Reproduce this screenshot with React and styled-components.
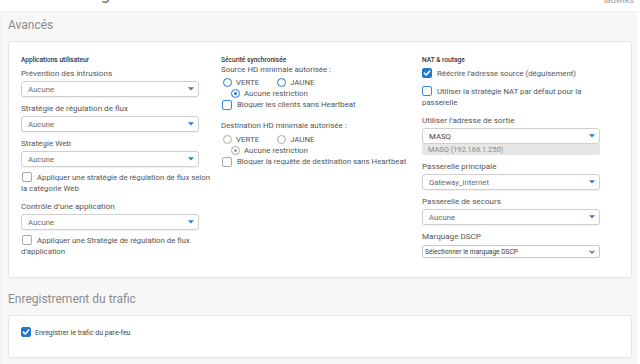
import React from "react";
import styled, { createGlobalStyle, css } from "styled-components";

const Global = createGlobalStyle`
  html, body { margin: 0; padding: 0; background: #ffffff; }
  body { font-family: Roboto, "Liberation Sans", Arial, sans-serif; -webkit-font-smoothing: antialiased; }
  * { box-sizing: border-box; }
`;

const Page = styled.div`
  width: 640px;
  height: 364px;
  overflow: hidden;
  background: #ffffff;
`;

const TopStrip = styled.div`
  height: 12px;
  overflow: hidden;
  display: flex;
  justify-content: space-between;
  align-items: flex-start;
  padding: 0 6px 0 8px;
  border-bottom: 1px solid #f0f0f0;
`;

const TopTitle = styled.span`
  font-size: 16px;
  line-height: 16px;
  margin-top: -13px;
  color: #666;
`;

const TopUser = styled.span`
  font-size: 9px;
  line-height: 9px;
  margin-top: -4px;
  color: #9a9a9a;
`;

const Panel = styled.div`
  width: 637px;
  background: #f7f7f7;
  border-left: 1px solid #efefef;
  padding: 5px 5px 6px 7px;
`;

const SectionTitle = styled.h2`
  margin: ${(p) => (p.$first ? "0" : "13px")} 0 8px 0;
  font-size: 12px;
  line-height: 16px;
  font-weight: 400;
  color: #8c8c8c;
`;

const Card = styled.div`
  background: #ffffff;
  border: 1px solid #e6e6e6;
  border-radius: 3px;
  box-shadow: 0 1px 1px rgba(0, 0, 0, 0.03);
  padding: ${(p) => p.$pad || "13px 12px 19px 12px"};
`;

const Grid = styled.div`
  display: grid;
  grid-template-columns: 200px 201px 1fr;
`;

const Column = styled.div`
  display: flex;
  flex-direction: column;
  min-width: 0;
  width: ${(p) => (p.$w ? `${p.$w}px` : "auto")};
`;

const GroupHead = styled.div`
  font-size: 6.6px;
  line-height: 10px;
  font-weight: 500;
  color: #333;
`;

const Label = styled.div`
  font-size: 8.1px;
  line-height: 12px;
  color: #555;
  margin-top: ${(p) => p.$mt ?? 0}px;
  margin-bottom: 2px;
  white-space: nowrap;
`;

const PlainText = styled.div`
  font-size: 7.9px;
  line-height: 10px;
  color: #555;
  margin-top: ${(p) => p.$mt ?? 0}px;
  white-space: nowrap;
`;

const SelectBox = styled.div`
  height: 16px;
  width: 178px;
  border: 1px solid #cfcfcf;
  border-radius: 3px;
  background: #fff;
  box-shadow: 0 1px 1px rgba(0, 0, 0, 0.06);
  display: flex;
  align-items: center;
  justify-content: space-between;
  padding: 0 4px 0 6px;
  font-size: 7.8px;
  color: ${(p) => (p.$dark ? "#444" : "#6a6a6a")};
  margin-bottom: ${(p) => p.$mb ?? 5}px;
`;

const NativeSelect = styled.div`
  height: 13px;
  width: 178px;
  margin-top: 1px;
  border: 1px solid #c8c8c8;
  border-radius: 2px;
  background: #fff;
  display: flex;
  align-items: center;
  justify-content: space-between;
  padding: 0 4px 0 2px;
  font-size: 6.6px;
  color: #3a3a3a;
`;

const ReadOnly = styled.div`
  height: 11px;
  width: 178px;
  background: #e6e6e6;
  border-radius: 2px;
  font-size: 7.4px;
  line-height: 11px;
  padding-left: 6px;
  color: #8a8a8a;
`;

const CheckPara = styled.div`
  font-size: 7.8px;
  line-height: 11px;
  color: ${(p) => (p.$dark ? "#444" : "#555")};
  margin-top: ${(p) => p.$mt ?? 0}px;
  margin-bottom: ${(p) => p.$mb ?? 0}px;
  ${(p) => p.$small && css`font-size: 7px;`}
`;

const Box = styled.span`
  display: inline-block;
  flex-shrink: 0;
  vertical-align: -2px;
  width: 10px;
  height: 10px;
  border-radius: 2px;
  margin: 0 ${(p) => p.$gap ?? 5}px 0 ${(p) => p.$ml ?? 1}px;
  position: relative;
  ${(p) =>
    p.$checked
      ? css`
          background: #1f77cf;
          border: 1px solid #1f77cf;
        `
      : p.$focus
      ? css`
          border: 1.5px solid #3b8ad8;
          background: #fff;
        `
      : css`
          border: 1px solid #a8a8a8;
          background: #fff;
        `}
`;

const CheckMark = () => (
  <svg width="10" height="10" viewBox="0 0 10 10" style={{ position: "absolute", left: -1, top: -1 }}>
    <path d="M2.3 5.2 L4.2 7 L7.8 3" fill="none" stroke="#fff" strokeWidth="1.6" strokeLinecap="round" strokeLinejoin="round" />
  </svg>
);

const Check = ({ checked, focus, gap, ml }) => (
  <Box $checked={checked} $focus={focus} $gap={gap} $ml={ml}>
    {checked && <CheckMark />}
  </Box>
);

const RadioRow = styled.div`
  display: flex;
  align-items: center;
  height: 11px;
  margin-top: ${(p) => p.$mt ?? 0}px;
  padding-left: ${(p) => p.$pl ?? 2}px;
  font-size: 7.9px;
  color: #555;
  white-space: nowrap;
`;

const RadioItem = styled.span`
  display: inline-flex;
  align-items: center;
  width: ${(p) => (p.$w ? `${p.$w}px` : "auto")};
`;

const Circle = styled.span`
  flex-shrink: 0;
  width: 9px;
  height: 9px;
  border-radius: 50%;
  margin-right: 4px;
  display: inline-flex;
  align-items: center;
  justify-content: center;
  border: ${(p) => (p.$disabled ? "1px solid #a9a9a9" : "1.8px solid #1f77cf")};
  &::after {
    content: "";
    display: ${(p) => (p.$on ? "block" : "none")};
    width: 3px;
    height: 3px;
    border-radius: 50%;
    background: ${(p) => (p.$disabled ? "#9a9a9a" : "#1f77cf")};
  }
`;

const CheckLine = styled.div`
  display: flex;
  align-items: center;
  height: 11px;
  font-size: 7.8px;
  color: #555;
  white-space: nowrap;
`;

const Caret = () => (
  <svg width="6" height="4" viewBox="0 0 6 4">
    <path d="M0 0.3 H6 L3 3.5 Z" fill="#2a7fd4" />
  </svg>
);

const Chevron = () => (
  <svg width="6" height="4" viewBox="0 0 6 4">
    <path d="M0.6 0.6 L3 3 L5.4 0.6" fill="none" stroke="#555" strokeWidth="1.1" />
  </svg>
);

const Select = ({ value, dark, mb }) => (
  <SelectBox $dark={dark} $mb={mb}>
    <span>{value}</span>
    <Caret />
  </SelectBox>
);

const Radio = ({ label, on, disabled, w }) => (
  <RadioItem $w={w}>
    <Circle $on={on} $disabled={disabled} />
    {label}
  </RadioItem>
);

export default function App() {
  return (
    <Page>
      <Global />
      <TopStrip>
        <TopTitle>Modifier la règle</TopTitle>
        <TopUser>ladwiks</TopUser>
      </TopStrip>
      <Panel>
        <SectionTitle $first>Avancés</SectionTitle>
        <Card>
          <Grid>
            <Column $w={192}>
              <GroupHead>Applications utilisateur</GroupHead>
              <Label $mt={2}>Prévention des intrusions</Label>
              <Select value="Aucune" />
              <Label>Stratégie de régulation de flux</Label>
              <Select value="Aucune" />
              <Label>Stratégie Web</Label>
              <Select value="Aucune" />
              <CheckPara $mb={6}>
                <Check />
                Appliquer une stratégie de régulation de flux selon la catégorie Web
              </CheckPara>
              <Label>Contrôle d’une application</Label>
              <Select value="Aucune" />
              <CheckPara>
                <Check />
                Appliquer une Stratégie de régulation de flux d’application
              </CheckPara>
            </Column>

            <Column>
              <GroupHead>Sécurité synchronisée</GroupHead>
              <PlainText>Source HD minimale autorisée :</PlainText>
              <RadioRow $mt={2}>
                <Radio label="VERTE" w={54} />
                <Radio label="JAUNE" />
              </RadioRow>
              <RadioRow $pl={10}>
                <Radio label="Aucune restriction" on />
              </RadioRow>
              <CheckLine>
                <Check focus ml={1} />
                Bloquer les clients sans Heartbeat
              </CheckLine>
              <PlainText $mt={11}>Destination HD minimale autorisée :</PlainText>
              <RadioRow $mt={3}>
                <Radio label="VERTE" w={54} disabled />
                <Radio label="JAUNE" disabled />
              </RadioRow>
              <RadioRow $pl={10}>
                <Radio label="Aucune restriction" on disabled />
              </RadioRow>
              <CheckLine>
                <Check ml={1} />
                Bloquer la requête de destination sans Heartbeat
              </CheckLine>
            </Column>

            <Column $w={185}>
              <GroupHead>NAT &amp; routage</GroupHead>
              <CheckPara $mt={3}>
                <Check checked ml={0} />
                Réécrire l’adresse source (déguisement)
              </CheckPara>
              <CheckPara $mt={7}>
                <Check focus ml={0} />
                Utiliser la stratégie NAT par défaut pour la passerelle
              </CheckPara>
              <Label $mt={6}>Utiliser l’adresse de sortie</Label>
              <Select value="MASQ" dark mb={0} />
              <ReadOnly>MASQ (192.168.1.250)</ReadOnly>
              <Label $mt={5}>Passerelle principale</Label>
              <Select value="Gateway_internet" />
              <Label>Passerelle de secours</Label>
              <Select value="Aucune" />
              <Label>Marquage DSCP</Label>
              <NativeSelect>
                <span>Sélectionner le marquage DSCP</span>
                <Chevron />
              </NativeSelect>
            </Column>
          </Grid>
        </Card>

        <SectionTitle>Enregistrement du trafic</SectionTitle>
        <Card $pad="11px 12px 18px 12px">
          <CheckPara $small $dark>
            <Check checked ml={0} gap={4} />
            Enregistrer le trafic du pare-feu
          </CheckPara>
        </Card>
      </Panel>
    </Page>
  );
}
